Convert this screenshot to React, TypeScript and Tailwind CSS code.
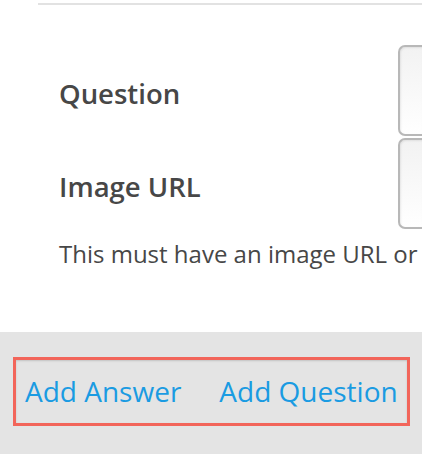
// Quiz editor fragment: question / image fields and the add-links footer.
const FIELDS = ["Question", "Image URL"];

function FieldRow({ label }: { label: string }) {
  return (
    <div className="flex h-[92px] items-center">
      <label className="w-[398px] shrink-0 pl-[59px] pt-[7px] text-[27.5px] font-semibold text-[#474747]">
        {label}
      </label>
      <div className="h-[91px] flex-1 rounded-l-[7px] border-2 border-r-0 border-[#b8b8b8] bg-gradient-to-b from-[#f2f2f2] to-white shadow-[inset_1px_1px_2px_rgba(0,0,0,0.08)]" />
    </div>
  );
}

export default function App() {
  return (
    <div className="flex h-[454px] w-[422px] flex-col overflow-hidden bg-white font-['Open_Sans',sans-serif]">
      <div className="pl-[38px] pt-[3px]">
        <div className="h-[2px] bg-[#e2e2e2]" />
      </div>

      <div className="mt-[39px] flex flex-col gap-[1px]">
        {FIELDS.map((field) => (
          <FieldRow key={field} label={field} />
        ))}
      </div>

      <p className="mt-[10px] whitespace-nowrap pl-[59px] text-[24px] leading-[30px] text-[#474747]">
        This must have an image URL or text
      </p>

      <div className="mt-auto h-[122px] bg-[#e4e4e4] pl-[13px] pt-[25px]">
        <div className="flex h-[69px] w-[397px] items-center gap-[38px] whitespace-nowrap border-[3px] border-[#f2655a] pb-[2px] pl-[9px] shadow-[inset_0_1px_2px_rgba(0,0,0,0.15)]">
          <a className="text-[28px] text-[#1a9be2]">Add Answer</a>
          <a className="text-[28px] text-[#1a9be2]">Add Question</a>
        </div>
      </div>
    </div>
  );
}
